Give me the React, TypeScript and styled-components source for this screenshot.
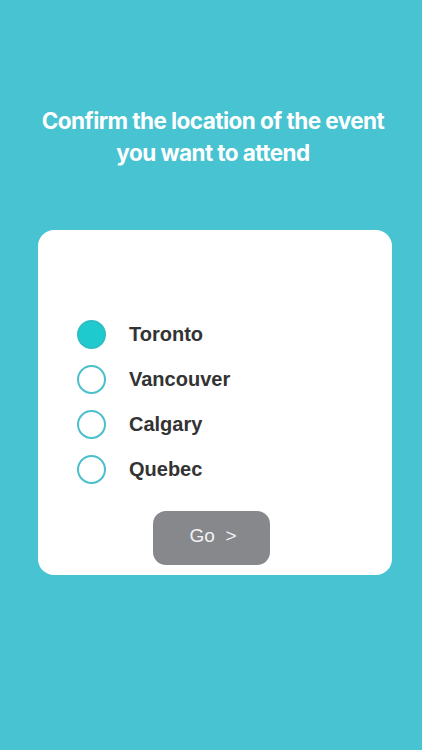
import React, { useState } from "react";
import styled, { createGlobalStyle } from "styled-components";

const Global = createGlobalStyle`
  html, body { margin: 0; padding: 0; background: #47c3d1; }
  body { font-family: "Liberation Sans", Arial, sans-serif; }
`;

const Page = styled.div`
  width: 422px;
  height: 750px;
  background: #47c3d1;
  display: flex;
  flex-direction: column;
  padding-top: 105px;
  box-sizing: border-box;
`;

const Title = styled.h1`
  margin: 0 0 0 4px;
  font-family: Inter, "Noto Sans", sans-serif;
  font-weight: 700;
  font-size: 22.5px;
  line-height: 32px;
  color: #ffffff;
  text-align: center;
  letter-spacing: -0.55px;
`;

const Card = styled.div`
  margin: 61px 0 0 38px;
  width: 354px;
  height: 345px;
  box-sizing: border-box;
  background: #ffffff;
  border-radius: 16px;
  padding: 82px 0 10px 39px;
  display: flex;
  flex-direction: column;
`;

const Options = styled.div`
  display: flex;
  flex-direction: column;
`;

const Row = styled.label`
  display: flex;
  align-items: center;
  height: 45px;
  gap: 23px;
  cursor: pointer;
`;

const Circle = styled.span<{ $checked: boolean }>`
  width: 29px;
  height: 29px;
  box-sizing: border-box;
  border-radius: 50%;
  border: 2.5px solid ${(p) => (p.$checked ? "#2cbfc6" : "#4bbfcc")};
  background: ${(p) => (p.$checked ? "#1ecacd" : "#ffffff")};
  flex: none;
`;

const Label = styled.span`
  font-family: "Liberation Sans", Arial, sans-serif;
  font-weight: 700;
  font-size: 20px;
  color: #333333;
`;

const GoButton = styled.button`
  margin: auto 0 0 76px;
  width: 117px;
  height: 54px;
  border: none;
  border-radius: 13px;
  background: #87888c;
  color: #f2f2f2;
  font-family: "Liberation Sans", Arial, sans-serif;
  font-size: 19px;
  white-space: pre;
  padding: 0 0 5px 3px;
`;

const cities = ["Toronto", "Vancouver", "Calgary", "Quebec"];

export default function App() {
  const [sel, setSel] = useState("Toronto");
  return (
    <>
      <Global />
      <Page>
        <Title>
          Confirm the location of the event
          <br />
          you want to attend
        </Title>
        <Card>
          <Options>
            {cities.map((c) => (
              <Row key={c} onClick={() => setSel(c)}>
                <Circle $checked={sel === c} />
                <Label>{c}</Label>
              </Row>
            ))}
          </Options>
          <GoButton>{"Go  >"}</GoButton>
        </Card>
      </Page>
    </>
  );
}
